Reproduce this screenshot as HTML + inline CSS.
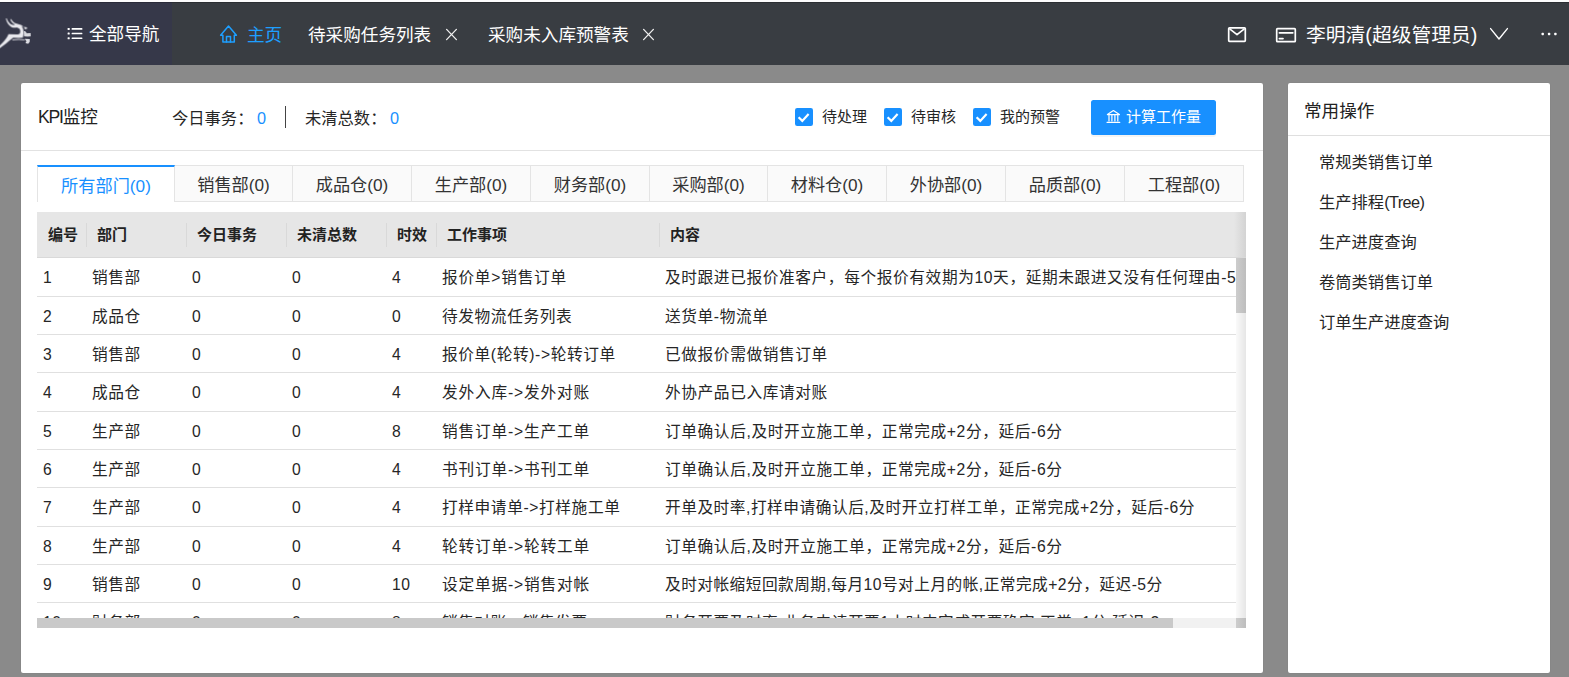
<!DOCTYPE html>
<html lang="zh-CN">
<head>
<meta charset="utf-8">
<title><span style="letter-spacing:-1.2px">KPI</span>监控</title>
<style>
*{box-sizing:border-box;margin:0;padding:0}
html,body{width:1569px;height:677px;overflow:hidden}
body{background:#8a8a8a;font-family:"Liberation Sans","Noto Sans CJK SC",sans-serif;color:#333;position:relative}
.abs{position:absolute}
svg{position:absolute;overflow:visible}
.topline{left:0;top:0;width:1569px;height:2px;background:#fdfdfd}
.header{left:0;top:2px;width:1569px;height:63px;background:#393d42}
.hleft{left:0;top:0;width:172px;height:63px;background:#363849}
.htxt{color:#fff;font-size:17.6px;line-height:24px;white-space:nowrap;top:20px}
.card{background:#fff;border-radius:2px;box-shadow:0 0 1px rgba(0,0,0,.18)}
.main{left:21px;top:83px;width:1242px;height:590px}
.side{left:1288px;top:83px;width:262px;height:590px}
.t15{font-size:15px;line-height:22px;white-space:nowrap;color:#262626}
.t16{font-size:16.3px;line-height:22px;white-space:nowrap;color:#262626}
.t17{font-size:17.6px;line-height:24px;white-space:nowrap;color:#222}
.blue{color:#1e9fff}
.ablue{color:#1890ff}
.tab{position:absolute;top:165px;height:37px;border:1px solid #e4e4e4;border-left:none;background:#fafafa;font-size:17.2px;line-height:39px;text-align:center;color:#333;white-space:nowrap}
.tab.on{background:#fff;border-top:2px solid #1890ff;border-bottom:none;border-left:1px solid #e4e4e4;color:#1890ff;line-height:38px}
.thead{left:37px;top:212px;width:1209px;height:46px;background:#e6e6e6;border-bottom:1px solid #d9d9d9}
.th{position:absolute;top:0;height:45px;line-height:45px;font-size:15px;font-weight:bold;color:#222;white-space:nowrap}
.sep{position:absolute;top:11px;height:24px;width:1px;background:#d9d9d9}
.tbody{left:37px;top:258px;width:1199px;height:360px;overflow:hidden;background:#fff}
.row{position:absolute;left:0;width:1199px;height:38.4px;border-bottom:1px solid #e0e0e0;overflow:hidden}
.row span{position:absolute;top:0;line-height:40px;font-size:15.7px;letter-spacing:.6px;color:#262626;white-space:nowrap}
.chk{width:18px;height:18px;border-radius:2.2px;background:#1890ff}
</style>
</head>
<body>
<div class="abs topline"></div>
<div class="abs header">
  <div class="abs hleft"></div>
  <div class="abs" style="left:0;top:0;width:1569px;height:1px;background:rgba(0,0,0,.22)"></div>
  <div class="abs htxt" style="left:89px">全部导航</div>
  <div class="abs htxt blue" style="left:247px;top:21px">主页</div>
  <div class="abs htxt" style="left:308px;top:21px">待采购任务列表</div>
  <div class="abs htxt" style="left:488px;top:21px">采购未入库预警表</div>
  <div class="abs htxt" style="left:1306px;top:21px;font-size:19.8px">李明清(超级管理员)</div>
</div>
<svg style="left:0;top:0" width="1569" height="70" viewBox="0 0 1569 70" fill="none">
  <defs><filter id="bl" x="-20%" y="-20%" width="140%" height="140%"><feGaussianBlur stdDeviation="8"/></filter></defs>
  <!-- logo -->
  <g transform="translate(0,14) scale(0.05612)" fill="#e9e9ee" filter="url(#bl)">
    <path d="M104,78 C112,140 150,200 205,232 C235,246 270,246 300,240 L345,262 C362,285 368,320 352,348 L318,362 L150,358 L140,385 C110,440 55,505 -8,562 L-8,612 C70,560 150,490 235,422 L330,424 L405,422 C418,395 424,340 418,295 C414,262 402,238 385,222 L480,238 L484,262 L440,268 C436,240 420,222 400,212 C370,190 320,175 285,168 C250,158 222,130 200,90 L184,92 C192,140 225,172 268,184 C250,196 225,198 200,186 C165,166 135,125 120,78 Z"/>
    <path d="M425,305 C450,300 468,318 472,345 L545,338 L548,398 L490,404 L430,396 Z" opacity=".92"/>
    <path d="M218,452 C290,438 380,436 448,456 L438,470 C370,456 290,458 222,470 Z" opacity=".85"/>
    <path d="M440,442 L530,446 L528,500 L500,532 L452,520 L470,486 Z" opacity=".95"/>
  </g>
  <!-- list icon -->
  <g fill="#fff">
    <rect x="67.6" y="27.9" width="2.1" height="2.1" rx=".6"/><rect x="71.6" y="28.1" width="10.8" height="1.6" rx=".5"/>
    <rect x="67.6" y="32.5" width="2.1" height="2.1" rx=".6"/><rect x="71.6" y="32.7" width="10.8" height="1.6" rx=".5"/>
    <rect x="67.6" y="37.2" width="2.1" height="2.1" rx=".6"/><rect x="71.6" y="37.4" width="10.8" height="1.6" rx=".5"/>
  </g>
  <!-- home icon -->
  <g stroke="#1e9fff" stroke-width="1.5" stroke-linejoin="round" stroke-linecap="round">
    <path d="M222.9,35.3 H220.6 L228.5,26 L236.4,35.3 H234.3 V41.9 H222.9 Z"/>
    <path d="M226.5,41.9 V36.6 H230.5 V41.9"/>
  </g>
  <!-- close icons -->
  <g stroke="#f0f0f0" stroke-width="1.3" stroke-linecap="round">
    <path d="M446.6,29.4 L456.4,39.6 M456.4,29.4 L446.6,39.6"/>
    <path d="M643.6,29.4 L653.4,39.6 M653.4,29.4 L643.6,39.6"/>
  </g>
  <!-- mail -->
  <g stroke="#fff" stroke-width="1.7" stroke-linejoin="round" stroke-linecap="round">
    <rect x="1228.7" y="27.8" width="16.6" height="13.6" rx=".8"/>
    <path d="M1230,29.2 L1237,34.6 L1244,29.2"/>
  </g>
  <!-- card -->
  <g stroke="#fff" stroke-width="1.7" stroke-linejoin="round" stroke-linecap="round">
    <rect x="1276.7" y="28.7" width="18.6" height="13" rx=".8"/>
    <path d="M1279.4,32.8 H1292.8 M1279.4,38.6 H1283"/>
  </g>
  <!-- chevron -->
  <path d="M1490.6,28.6 L1499,39 L1507.4,28.6" stroke="#fff" stroke-width="1.4" stroke-linecap="round" stroke-linejoin="round"/>
  <!-- dots -->
  <g fill="#fff"><rect x="1541.5" y="32.8" width="2.4" height="2.4" rx=".7"/><rect x="1547.9" y="32.8" width="2.4" height="2.4" rx=".7"/><rect x="1554.2" y="32.8" width="2.4" height="2.4" rx=".7"/></g>
</svg>

<div class="abs card main"></div>
<div class="abs card side"></div>

<div class="abs t17" style="left:38px;top:105px"><span style="letter-spacing:-1.2px">KPI</span>监控</div>
<div class="abs t16" style="left:172px;top:107px">今日事务：</div>
<div class="abs t16 ablue" style="left:257px;top:107px">0</div>
<div class="abs" style="left:285px;top:106px;width:1px;height:22px;background:#444"></div>
<div class="abs t16" style="left:305px;top:107px">未清总数：</div>
<div class="abs t16 ablue" style="left:390px;top:107px">0</div>

<div class="abs chk" style="left:795px;top:108px"></div>
<div class="abs chk" style="left:884px;top:108px"></div>
<div class="abs chk" style="left:973px;top:108px"></div>
<div class="abs t15" style="left:822px;top:106px">待处理</div>
<div class="abs t15" style="left:911px;top:106px">待审核</div>
<div class="abs t15" style="left:1000px;top:106px">我的预警</div>
<div class="abs" style="left:1091px;top:100px;width:125px;height:35px;background:#1890ff;border-radius:2.5px;box-shadow:0 2px 0 rgba(0,0,0,.045)"></div>
<div class="abs t15" style="left:1126px;top:106px;color:#fff">计算工作量</div>

<div class="abs" style="left:21px;top:150px;width:1242px;height:1px;background:#e2e2e2"></div>
<svg style="left:0;top:83px" width="1263" height="70" viewBox="0 83 1263 70" fill="none">
  <g stroke="#fff" stroke-width="2.2" stroke-linecap="butt" stroke-linejoin="miter">
    <path d="M798.6,117.3 L802.3,120.9 L808.6,114.1"/>
    <path d="M887.6,117.3 L891.3,120.9 L897.6,114.1"/>
    <path d="M976.6,117.3 L980.3,120.9 L986.6,114.1"/>
  </g>
  <g stroke="#fff" stroke-width="1.2" stroke-linejoin="round" stroke-linecap="round">
    <path d="M1107.4,114.6 L1113.4,110.6 L1119.4,114.6 Z" fill="none"/>
    <path d="M1109,115.4 V121 M1111.9,115.4 V121 M1114.9,115.4 V121 M1117.8,115.4 V121"/>
    <path d="M1107,122.3 H1119.8"/>
  </g>
</svg>

<div class="abs" style="left:37px;top:201px;width:1207px;height:1px;background:#e4e4e4"></div>
<div class="tab on" style="left:37px;width:138px">所有部门(0)</div>
<div class="tab" style="left:175px;width:118px">销售部(0)</div>
<div class="tab" style="left:293px;width:119px">成品仓(0)</div>
<div class="tab" style="left:412px;width:119px">生产部(0)</div>
<div class="tab" style="left:531px;width:119px">财务部(0)</div>
<div class="tab" style="left:650px;width:118px">采购部(0)</div>
<div class="tab" style="left:768px;width:119px">材料仓(0)</div>
<div class="tab" style="left:887px;width:119px">外协部(0)</div>
<div class="tab" style="left:1006px;width:119px">品质部(0)</div>
<div class="tab" style="left:1125px;width:119px">工程部(0)</div>
<div class="abs thead">
<div class="th" style="left:11px">编号</div>
<i class="sep" style="left:49px"></i>
<div class="th" style="left:60px">部门</div>
<i class="sep" style="left:149px"></i>
<div class="th" style="left:160px">今日事务</div>
<i class="sep" style="left:249px"></i>
<div class="th" style="left:260px">未清总数</div>
<i class="sep" style="left:349px"></i>
<div class="th" style="left:360px">时效</div>
<i class="sep" style="left:399px"></i>
<div class="th" style="left:410px">工作事项</div>
<i class="sep" style="left:622px"></i>
<div class="th" style="left:633px">内容</div>
<i class="abs" style="left:1197px;top:0;width:12px;height:45px;background:linear-gradient(90deg,#e6e6e6,#d3d3d3)"></i>
</div>
<div class="abs tbody">
<div class="row" style="top:0px;height:39px">
<span style="left:6px">1</span>
<span style="left:55px">销售部</span>
<span style="left:155px">0</span>
<span style="left:255px">0</span>
<span style="left:355px">4</span>
<span style="left:405px;letter-spacing:.75px">报价单&gt;销售订单</span>
<span style="left:628px">及时跟进已报价准客户，每个报价有效期为10天，延期未跟进又没有任何理由-5分，正常完成+2分</span>
</div>
<div class="row" style="top:39px;height:38px">
<span style="left:6px">2</span>
<span style="left:55px">成品仓</span>
<span style="left:155px">0</span>
<span style="left:255px">0</span>
<span style="left:355px">0</span>
<span style="left:405px">待发物流任务列表</span>
<span style="left:628px">送货单-物流单</span>
</div>
<div class="row" style="top:77px;height:38px">
<span style="left:6px">3</span>
<span style="left:55px">销售部</span>
<span style="left:155px">0</span>
<span style="left:255px">0</span>
<span style="left:355px">4</span>
<span style="left:405px">报价单(轮转)-&gt;轮转订单</span>
<span style="left:628px">已做报价需做销售订单</span>
</div>
<div class="row" style="top:115px;height:39px">
<span style="left:6px">4</span>
<span style="left:55px">成品仓</span>
<span style="left:155px">0</span>
<span style="left:255px">0</span>
<span style="left:355px">4</span>
<span style="left:405px;letter-spacing:.8px">发外入库-&gt;发外对账</span>
<span style="left:628px">外协产品已入库请对账</span>
</div>
<div class="row" style="top:154px;height:38px">
<span style="left:6px">5</span>
<span style="left:55px">生产部</span>
<span style="left:155px">0</span>
<span style="left:255px">0</span>
<span style="left:355px">8</span>
<span style="left:405px;letter-spacing:.8px">销售订单-&gt;生产工单</span>
<span style="left:628px">订单确认后,及时开立施工单，正常完成+2分，延后-6分</span>
</div>
<div class="row" style="top:192px;height:38px">
<span style="left:6px">6</span>
<span style="left:55px">生产部</span>
<span style="left:155px">0</span>
<span style="left:255px">0</span>
<span style="left:355px">4</span>
<span style="left:405px;letter-spacing:.8px">书刊订单-&gt;书刊工单</span>
<span style="left:628px">订单确认后,及时开立施工单，正常完成+2分，延后-6分</span>
</div>
<div class="row" style="top:230px;height:39px">
<span style="left:6px">7</span>
<span style="left:55px">生产部</span>
<span style="left:155px">0</span>
<span style="left:255px">0</span>
<span style="left:355px">4</span>
<span style="left:405px">打样申请单-&gt;打样施工单</span>
<span style="left:628px;letter-spacing:.52px">开单及时率,打样申请确认后,及时开立打样工单，正常完成+2分，延后-6分</span>
</div>
<div class="row" style="top:269px;height:38px">
<span style="left:6px">8</span>
<span style="left:55px">生产部</span>
<span style="left:155px">0</span>
<span style="left:255px">0</span>
<span style="left:355px">4</span>
<span style="left:405px;letter-spacing:.8px">轮转订单-&gt;轮转工单</span>
<span style="left:628px">订单确认后,及时开立施工单，正常完成+2分，延后-6分</span>
</div>
<div class="row" style="top:307px;height:38px">
<span style="left:6px">9</span>
<span style="left:55px">销售部</span>
<span style="left:155px">0</span>
<span style="left:255px">0</span>
<span style="left:355px">10</span>
<span style="left:405px;letter-spacing:.8px">设定单据-&gt;销售对帐</span>
<span style="left:628px;letter-spacing:.46px">及时对帐缩短回款周期,每月10号对上月的帐,正常完成+2分，延迟-5分</span>
</div>
<div class="row" style="top:345px;height:39px">
<span style="left:6px">10</span>
<span style="left:55px">财务部</span>
<span style="left:155px">0</span>
<span style="left:255px">0</span>
<span style="left:355px">8</span>
<span style="left:405px">销售对账-&gt;销售发票</span>
<span style="left:628px;letter-spacing:.5px">财务开票及时率,业务申请开票1小时内完成开票确定,正常+1分,延迟-2</span>
</div>
</div>
<div class="abs" style="left:1236px;top:258px;width:10px;height:360px;background:linear-gradient(90deg,#fafafa,#e6e6e6)"></div>
<div class="abs" style="left:1236px;top:258px;width:10px;height:55px;background:linear-gradient(90deg,#cdcdcd,#bdbdbd)"></div>
<div class="abs" style="left:37px;top:618px;width:1199px;height:10px;background:#f1f1f1"></div>
<div class="abs" style="left:37px;top:618px;width:1136px;height:10px;background:#c9c9c9"></div>
<div class="abs" style="left:1236px;top:618px;width:10px;height:10px;background:linear-gradient(90deg,#cdcdcd,#bdbdbd)"></div>


<div class="abs t17" style="left:1304px;top:99px">常用操作</div>
<div class="abs" style="left:1288px;top:135px;width:262px;height:1px;background:#dfdfdf"></div>
<div class="abs t16" style="left:1319px;top:151px">常规类销售订单</div>
<div class="abs t16" style="left:1319px;top:191px">生产排程<span style="letter-spacing:-.6px">(Tree)</span></div>
<div class="abs t16" style="left:1319px;top:231px">生产进度查询</div>
<div class="abs t16" style="left:1319px;top:271px">卷筒类销售订单</div>
<div class="abs t16" style="left:1319px;top:311px">订单生产进度查询</div>
</body>
</html>
